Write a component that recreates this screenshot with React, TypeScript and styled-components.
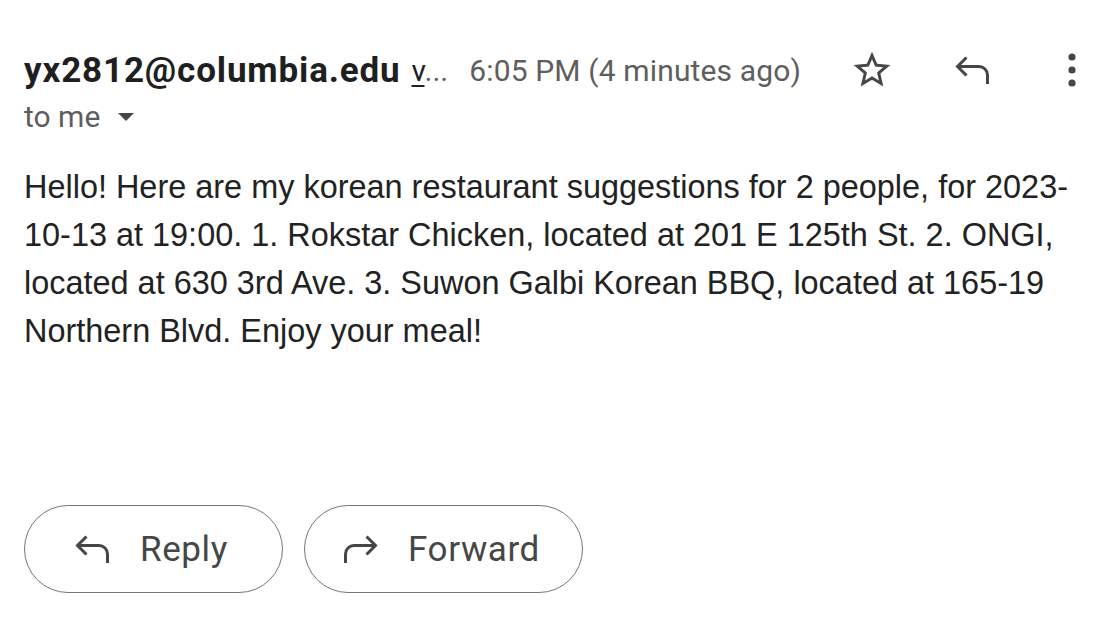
import React from "react";
import styled, { createGlobalStyle } from "styled-components";

const Global = createGlobalStyle`
  html, body { margin: 0; padding: 0; background: #fff; }
  body { font-family: "Liberation Sans", Arial, sans-serif; }
`;

const Page = styled.div`
  width: 1096px;
  height: 619px;
  box-sizing: border-box;
  padding: 44px 0 0 24px;
  display: flex;
  flex-direction: column;
  overflow: hidden;
`;

const HeaderRow = styled.div`
  display: flex;
  align-items: center;
  height: 52px;
  white-space: nowrap;
`;

const Sender = styled.span`
  font-family: Roboto, "Liberation Sans", sans-serif;
  font-weight: 700;
  font-size: 35px;
  letter-spacing: 0.85px;
  color: #1f1f1f;
`;

const Via = styled.span`
  font-family: Roboto, sans-serif;
  font-size: 30px;
  color: #5e5e5e;
  margin-left: 11px;
  u { text-decoration-thickness: 2px; text-underline-offset: 4px; color: #1f1f1f; }
`;

const Time = styled.span`
  font-family: Roboto, sans-serif;
  font-size: 30px;
  letter-spacing: 0.15px;
  color: #5e5e5e;
  margin-left: 21px;
`;

const Actions = styled.div`
  margin-left: auto;
  display: flex;
  align-items: center;
  gap: 52px;
`;

const IconBtn = styled.div`
  width: 48px;
  height: 48px;
  display: flex;
  align-items: center;
  justify-content: center;
`;

const ToRow = styled.div`
  display: flex;
  align-items: center;
  font-family: Roboto, sans-serif;
  font-size: 30px;
  color: #5e5e5e;
  height: 40px;
`;

const Caret = styled.span`
  display: inline-block;
  width: 0;
  height: 0;
  border-left: 8px solid transparent;
  border-right: 8px solid transparent;
  border-top: 8px solid #444746;
  margin-left: 18px;
  margin-top: 2px;
`;

const Body = styled.div`
  margin-top: 27px;
  width: 1062px;
  font-family: "Liberation Sans", Arial, sans-serif;
  font-size: 32.45px;
  line-height: 48px;
  color: #222;
`;

const ButtonRow = styled.div`
  display: flex;
  gap: 21px;
  margin-top: 150px;
`;

const PillButton = styled.div<{ $w: number; $pad: number }>`
  width: ${(p) => p.$w}px;
  height: 88px;
  box-sizing: border-box;
  border: 1.5px solid #747775;
  border-radius: 44px;
  display: flex;
  align-items: center;
  padding-left: ${(p) => p.$pad}px;
  gap: 30px;
  font-family: Roboto, sans-serif;
  font-size: 35px;
  letter-spacing: 0.6px;
  color: #444746;
`;

const StarIcon = () => (
  <svg width="44" height="44" viewBox="0 0 24 24" fill="#444746">
    <path d="M22 9.24l-7.19-.62L12 2 9.19 8.63 2 9.24l5.46 4.73L5.82 21 12 17.27 18.18 21l-1.63-7.03L22 9.24zM12 15.4l-3.76 2.27 1-4.28-3.32-2.88 4.38-.38L12 6.1l1.71 4.04 4.38.38-3.32 2.88 1 4.28L12 15.4z" />
  </svg>
);

const ReplyIcon = () => (
  <svg width="35" height="28" viewBox="0 0 35 28" fill="none" stroke="#444746" strokeWidth="3">
    <path d="M11.5 1.5L2.5 10.5L11.5 19.5" />
    <path d="M2.5 10.5H24a8.5 8.5 0 0 1 8.5 8.5V28" />
  </svg>
);

const ForwardIcon = () => (
  <svg width="35" height="28" viewBox="0 0 35 28" fill="none" stroke="#444746" strokeWidth="3">
    <path d="M23.5 1.5L32.5 10.5L23.5 19.5" />
    <path d="M32.5 10.5H11a8.5 8.5 0 0 0 -8.5 8.5V28" />
  </svg>
);

const KebabIcon = () => (
  <svg width="12" height="36" viewBox="0 0 12 36" fill="#444746">
    <circle cx="6" cy="5" r="3.6" />
    <circle cx="6" cy="18" r="3.6" />
    <circle cx="6" cy="31" r="3.6" />
  </svg>
);

export default function App() {
  return (
    <>
      <Global />
      <Page>
        <HeaderRow>
          <Sender>yx2812@columbia.edu</Sender>
          <Via>
            <u>v</u>...
          </Via>
          <Time>6:05 PM (4 minutes ago)</Time>
          <Actions>
            <IconBtn>
              <StarIcon />
            </IconBtn>
            <IconBtn>
              <ReplyIcon />
            </IconBtn>
            <IconBtn>
              <KebabIcon />
            </IconBtn>
          </Actions>
        </HeaderRow>
        <ToRow>
          to me
          <Caret />
        </ToRow>
        <Body>
          Hello! Here are my korean restaurant suggestions for 2 people, for 2023-10-13 at 19:00. 1. Rokstar
          Chicken, located at 201 E 125th St. 2. ONGI, located at 630 3rd Ave. 3. Suwon Galbi Korean BBQ, located
          at 165-19 Northern Blvd. Enjoy your meal!
        </Body>
        <ButtonRow>
          <PillButton $w={259} $pad={50}>
            <ReplyIcon />
            Reply
          </PillButton>
          <PillButton $w={279} $pad={38}>
            <ForwardIcon />
            Forward
          </PillButton>
        </ButtonRow>
      </Page>
    </>
  );
}
